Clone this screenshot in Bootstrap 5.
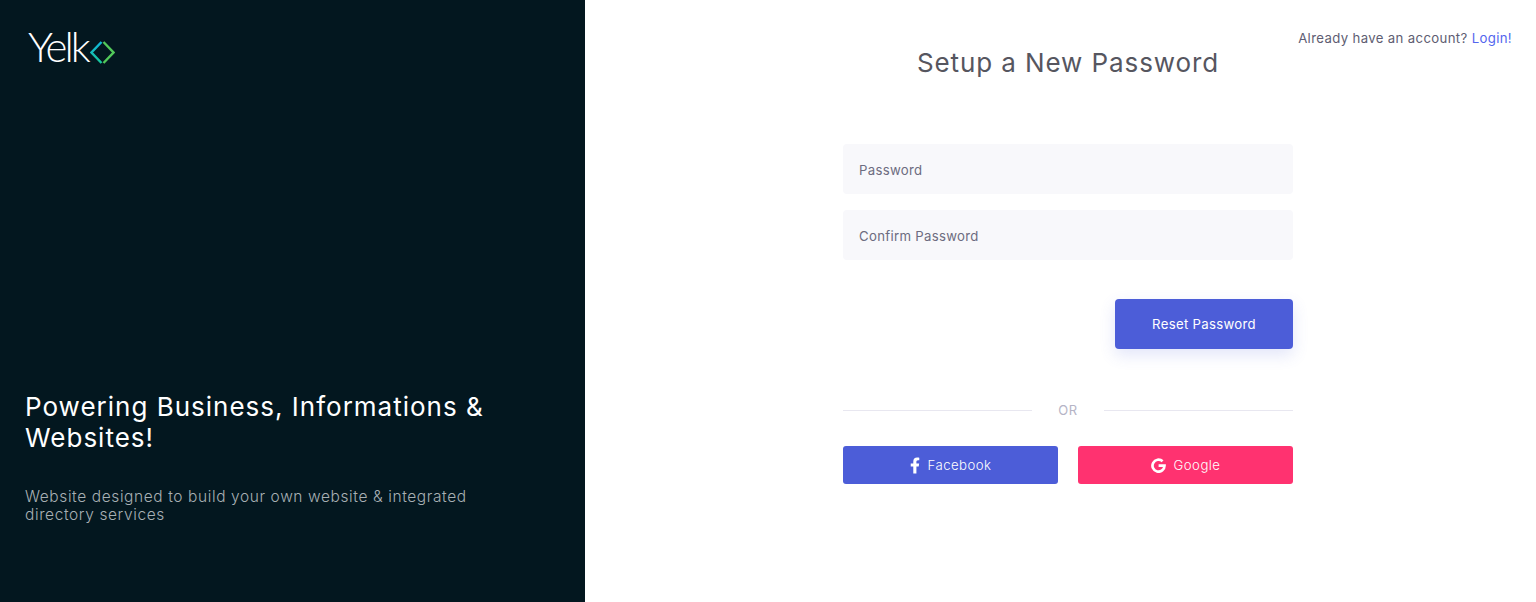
<!DOCTYPE html>
<html lang="en">
<head>
    <meta charset="UTF-8">
    <meta name="viewport" content="width=device-width, initial-scale=1.0">
    <title>Setup a New Password</title>
    <link href="https://cdn.jsdelivr.net/npm/bootstrap@5.3.0/dist/css/bootstrap.min.css" rel="stylesheet">
    <style>
        body { font-family: Inter, "Open Sans", sans-serif; height: 602px; overflow: hidden; }
        .auth-wrap { height: 602px; }
        .auth-side { width: 585px; background: #03171f; padding: 29px 25px 0 25px; }
        .logo-box { height: 34px; margin-left: 3px; }
        .logo-word { font-family: Lato, sans-serif; font-weight: 300; font-size: 42px; line-height: 34px; color: #fff; letter-spacing: -3px; }
        .logo-mark { margin: 12px 0 0 2px; }
        .side-title { font-size: 26px; line-height: 31px; font-weight: 400; color: #fff; margin: 328px 0 0; letter-spacing: 1px; }
        .side-text { font-size: 15.5px; line-height: 18px; font-weight: 300; color: #a8b0b4; margin: 35px 0 0; max-width: 460px; letter-spacing: .6px; }
        .auth-main { padding-left: 15px; }
        .top-note { top: 30px; right: 24px; font-size: 13.2px; line-height: 17px; color: #5e5d72; letter-spacing: .35px; }
        .top-note a { color: #5366ee; text-decoration: none; }
        .form-box { width: 450px; }
        .page-title { font-size: 26px; line-height: 32px; font-weight: 400; color: #56565f; margin: 47px 0 65px; letter-spacing: .9px; }
        .pw-input { height: 50px; background: #f8f8fb; border: 0; border-radius: 4px; padding: 2px 16px 0; font-size: 13.2px; letter-spacing: .3px; color: #5e5d72; margin-bottom: 16px; }
        .pw-input::placeholder { color: #6d6c80; opacity: 1; }
        .reset-btn { width: 178px; height: 50px; padding-top: 8px; background: #4c5dd8; border: 0; border-radius: 4px; font-size: 13.2px; font-weight: 400; letter-spacing: .3px; color: #fff; box-shadow: 0 6px 16px rgba(76, 93, 216, .16); margin-top: 23px; }
        .or-row { margin: 50px 0 25px; height: 22px; }
        .or-line { height: 1px; background: #e8e7f0; }
        .or-text { width: 72px; padding-top: 2px; text-align: center; font-size: 13px; letter-spacing: .5px; color: #b5b4c6; }
        .social-btn { height: 38px; padding-top: 8px; border: 0; border-radius: 3px; font-size: 13.2px; font-weight: 300; letter-spacing: .45px; color: #fff; }
        .social-fb { background: #4c5dd8; }
        .social-gg { background: #ff3270; }
        .social-gap { gap: 20px; }
        .fb-icon { fill: #fff; margin-top: -2px; }
        .gg-icon { fill: none; stroke: #fff; stroke-width: 2.7; margin-top: -2px; }
    </style>
</head>
<body>
    <div class="auth-wrap d-flex">

        <!-- Left panel -->
        <div class="auth-side flex-shrink-0">
            <div class="logo-box d-flex align-items-center">
                <span class="logo-word">Yelk</span>
                <svg class="logo-mark" width="25" height="23" viewBox="0 0 25 23" fill="none" stroke-width="2.4">
                    <defs>
                        <linearGradient id="chevL" x1="0" y1="0" x2="0" y2="1"><stop offset="0" stop-color="#10b5dc"/><stop offset="1" stop-color="#18c79a"/></linearGradient>
                    </defs>
                    <path d="M11.5 1 1.5 11.5l10 10.5" stroke="url(#chevL)"/>
                    <path d="M13.5 1l10 10.5-10 10.5" stroke="#52c95a"/>
                </svg>
            </div>
            <h1 class="side-title">Powering Business, Informations &amp; Websites!</h1>
            <p class="side-text">Website designed to build your own website &amp; integrated directory services</p>
        </div>

        <!-- Right panel -->
        <div class="auth-main flex-grow-1 position-relative d-flex justify-content-center">
            <div class="top-note position-absolute">Already have an account? <a href="#">Login!</a></div>
            <div class="form-box">
                <h2 class="page-title text-center">Setup a New Password</h2>
                <input type="password" class="form-control pw-input" placeholder="Password">
                <input type="password" class="form-control pw-input" placeholder="Confirm Password">
                <div class="d-flex justify-content-end">
                    <button class="btn reset-btn">Reset Password</button>
                </div>
                <div class="or-row d-flex align-items-center">
                    <div class="or-line flex-grow-1"></div>
                    <div class="or-text">OR</div>
                    <div class="or-line flex-grow-1"></div>
                </div>
                <div class="d-flex social-gap">
                    <button class="btn social-btn social-fb w-100 d-flex align-items-center justify-content-center">
                        <svg class="fb-icon me-2" width="10" height="17" viewBox="0 0 320 512"><path d="M279 288l14-93h-89v-60c0-25 12-50 52-50h41V6s-37-6-72-6C152 0 105 44 105 124v71H23v93h82v224h100V288z"/></svg>
                        Facebook
                    </button>
                    <button class="btn social-btn social-gg w-100 d-flex align-items-center justify-content-center">
                        <svg class="gg-icon me-2" width="15" height="15" viewBox="0 0 15 15"><path d="M11.6 3.3A6 6 0 1 0 13.5 7.7H7.6"/></svg>
                        Google
                    </button>
                </div>
            </div>
        </div>
    </div>
    <script src="https://cdn.jsdelivr.net/npm/bootstrap@5.3.0/dist/js/bootstrap.bundle.min.js"></script>
</body>
</html>
